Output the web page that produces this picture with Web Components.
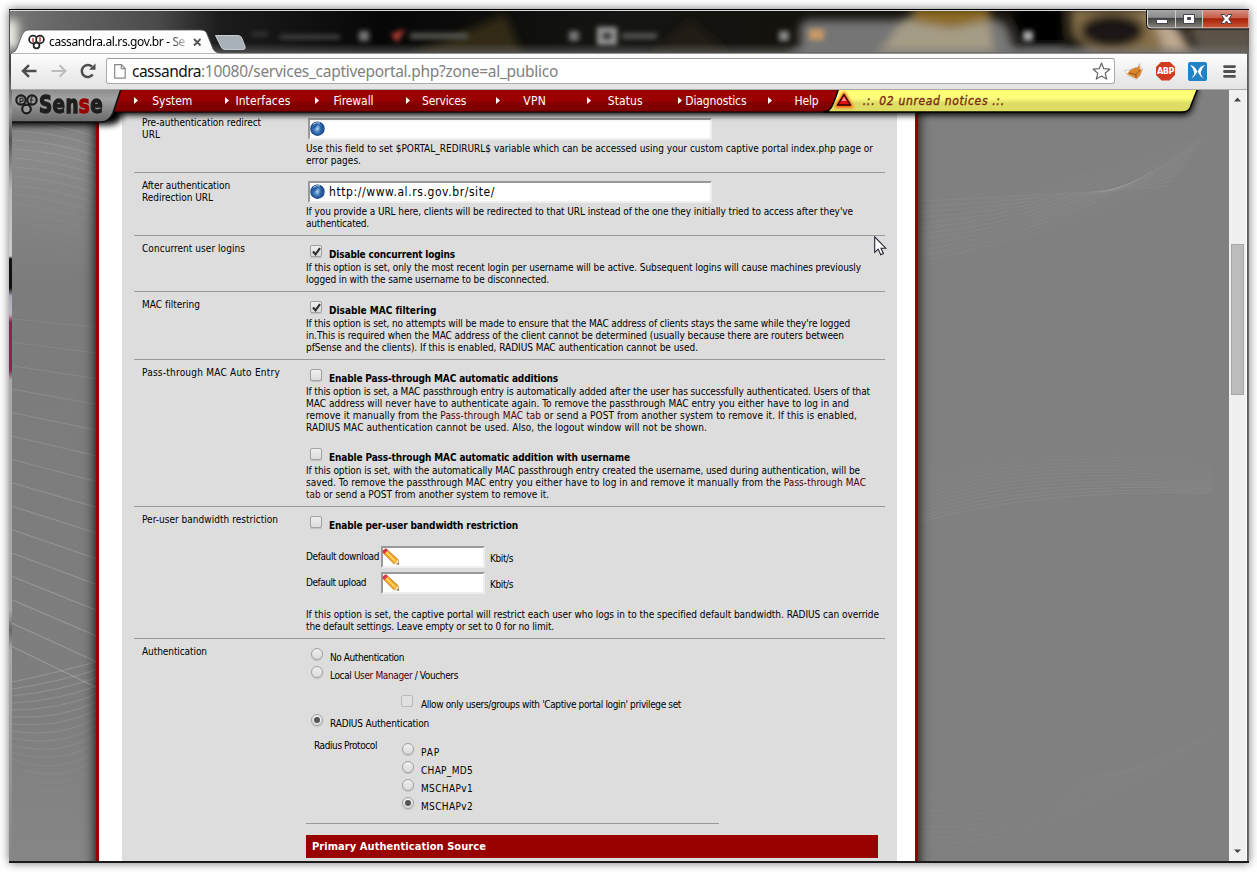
<!DOCTYPE html>
<html lang="en">
<head>
<meta charset="utf-8">
<title>cassandra.al.rs.gov.br - Services: Captive portal</title>
<style>
html,body{margin:0;padding:0;background:#fff;overflow:hidden}
body{width:1257px;height:872px;font:10px/12px "DejaVu Sans Condensed","Noto Sans",sans-serif;color:#000}
</style>
</head>
<body>
<browser-window>
  <title-strip></title-strip>
  <tool-bar></tool-bar>
  <portal-page>
    <setting-row h="63"><span slot="label"><fit-text w="119">Pre-authentication redirect</fit-text><br><fit-text w="18">URL</fit-text></span>
      <url-field></url-field>
      <help-text><fit-text w="567">Use this field to set $PORTAL_REDIRURL$ variable which can be accessed using your custom captive portal index.php page or</fit-text><fit-text w="55">error pages.</fit-text></help-text>
    </setting-row>
    <setting-row h="63"><span slot="label"><fit-text w="88">After authentication</fit-text><br><fit-text w="71">Redirection URL</fit-text></span>
      <url-field><fit-text w="166">http://www.al.rs.gov.br/site/</fit-text></url-field>
      <help-text><fit-text w="547">If you provide a URL here, clients will be redirected to that URL instead of the one they initially tried to access after they've</fit-text><fit-text w="63">authenticated.</fit-text></help-text>
    </setting-row>
    <setting-row h="56"><span slot="label"><fit-text w="103">Concurrent user logins</fit-text></span>
      <check-option checked><fit-text w="126">Disable concurrent logins</fit-text></check-option>
      <help-text><fit-text w="555">If this option is set, only the most recent login per username will be active. Subsequent logins will cause machines previously</fit-text><fit-text w="243">logged in with the same username to be disconnected.</fit-text></help-text>
    </setting-row>
    <setting-row h="68"><span slot="label"><fit-text w="58">MAC filtering</fit-text></span>
      <check-option checked><fit-text w="107">Disable MAC filtering</fit-text></check-option>
      <help-text><fit-text w="544">If this option is set, no attempts will be made to ensure that the MAC address of clients stays the same while they're logged</fit-text><fit-text w="538">in.This is required when the MAC address of the client cannot be determined (usually because there are routers between</fit-text><fit-text w="392">pfSense and the clients). If this is enabled, RADIUS MAC authentication cannot be used.</fit-text></help-text>
    </setting-row>
    <setting-row h="147"><span slot="label"><fit-text w="138">Pass-through MAC Auto Entry</fit-text></span>
      <check-option><fit-text w="229">Enable Pass-through MAC automatic additions</fit-text></check-option>
      <help-text><fit-text w="564">If this option is set, a MAC passthrough entry is automatically added after the user has successfully authenticated. Users of that</fit-text><fit-text w="543">MAC address will never have to authenticate again. To remove the passthrough MAC entry you either have to log in and</fit-text><fit-text w="551">remove it manually from the <span style="color:#500000">Pass-through MAC tab</span> or send a POST from another system to remove it. If this is enabled,</fit-text><fit-text w="401">RADIUS MAC authentication cannot be used. Also, the logout window will not be shown.</fit-text></help-text>
      <check-option style="margin-top:5px"><fit-text w="301">Enable Pass-through MAC automatic addition with username</fit-text></check-option>
      <help-text><fit-text w="554">If this option is set, with the automatically MAC passthrough entry created the username, used during authentication, will be</fit-text><fit-text w="560">saved. To remove the passthrough MAC entry you either have to log in and remove it manually from the <span style="color:#500000">Pass-through MAC</span></fit-text><fit-text w="243"><span style="color:#500000">tab</span> or send a POST from another system to remove it.</fit-text></help-text>
    </setting-row>
    <setting-row h="132"><span slot="label"><fit-text w="136">Per-user bandwidth restriction</fit-text></span>
      <check-option><fit-text w="189">Enable per-user bandwidth restriction</fit-text></check-option>
      <rate-field style="margin-top:14px"><fit-text w="73">Default download</fit-text></rate-field>
      <rate-field><fit-text w="60">Default upload</fit-text></rate-field>
      <help-text style="margin-top:11px"><fit-text w="573">If this option is set, the captive portal will restrict each user who logs in to the specified default bandwidth. RADIUS can override</fit-text><fit-text w="248">the default settings. Leave empty or set to 0 for no limit.</fit-text></help-text>
    </setting-row>
    <setting-row h="222" last><span slot="label"><fit-text w="65">Authentication</fit-text></span>
      <auth-options></auth-options>
    </setting-row>
  </portal-page>
</browser-window>

<script>
const make=(name,html,setup)=>customElements.define(name,class extends HTMLElement{
  constructor(){super();this.attachShadow({mode:'open'}).innerHTML=html}
  connectedCallback(){if(setup)setup.call(this,this.shadowRoot)}
});

make('browser-window',`<style>
:host{display:flex;flex-direction:column;box-sizing:border-box;position:relative;width:1240px;height:854px;margin:9px 0 0 9px;padding:0 2px 2px 2px;border-top:1px solid #000;
background:linear-gradient(90deg,#0000 1238px,#55504a 1238px,#777 1240px),linear-gradient(180deg,#555 0,#444 60px,#999 100px,#555 130px,#bbb 180px,#ccc 246px,#111 249px,#111 278px,#aab 286px,#b9b9c4 304px,#902050 312px,#902050 360px,#aaa 370px,#aaa 600px,#666 620px,#aaa 640px,#888 840px);
box-shadow:0 0 9px rgba(0,0,0,.55)}
.foot{position:absolute;left:0;right:0;bottom:0;height:2px;background:#1b1b1e}
</style><slot></slot><div class="foot"></div>`);

make('title-strip',`<style>
:host{display:block;position:relative;height:44px;margin:0 -2px 0 -1px;overflow:hidden;color:#000}
.art{position:absolute;left:-1px;top:0}
.tab{position:relative;display:flex;align-items:center;margin:19px 0 0 18px;height:26px;width:181px;font:12px/16px "Noto Sans","Open Sans",sans-serif}
.tab svg{flex:none}.name{margin-left:4px;margin-top:-1px;width:136px;-webkit-mask:linear-gradient(90deg,#000 118px,#0004 136px)}
.ctl{position:absolute;right:0;top:0}
</style>
<svg class="art" width="1240" height="44" viewBox="9 10 1240 44">
<defs><filter id="b" x="-20%" y="-40%" width="140%" height="180%"><feGaussianBlur stdDeviation="5"/></filter>
<filter id="s" x="-20%" y="-40%" width="140%" height="180%"><feGaussianBlur stdDeviation="2.600"/></filter>
<linearGradient id="g"><stop offset="0" stop-color="#777"/><stop offset=".04" stop-color="#666"/><stop offset=".12" stop-color="#4a4a4a"/><stop offset=".17" stop-color="#1c1c1c"/><stop offset=".3" stop-color="#070707"/><stop offset=".5" stop-color="#151513"/><stop offset=".63" stop-color="#14120d"/><stop offset="1" stop-color="#16120c"/></linearGradient>
<linearGradient id="f" x2="0" y2="1"><stop offset=".75" stop-color="#777" stop-opacity="0"/><stop offset="1" stop-color="#777" stop-opacity=".6"/></linearGradient>
<linearGradient id="t" x2="0" y2="1"><stop offset="0" stop-color="#fff"/><stop offset="1" stop-color="#fbfbfb"/></linearGradient></defs>
<rect x="9" y="10" width="1240" height="44" fill="url(#g)"/>
<g filter="url(#b)"><rect x="0" y="20" width="18" height="30" fill="#e8ebe2"/><path d="M410 54L460 34 505 14 522 54z" fill="#302b16"/><path d="M650 54L690 20 730 54z" fill="#241c16"/>
<path d="M800 60V26Q803 20 811 20H996Q1006 20 1010 34L1018 60z" fill="#747474"/><path d="M790 50h460v10H790z" fill="#777"/>
<path d="M905 18h84l6 42H874z" fill="#a59c86"/><path d="M912 8h76l4 12-40 8-38-6z" fill="#8b6b20"/>
<path d="M1070 8h90l36 48h-100l-24-20z" fill="#85704a"/><ellipse cx="1112" cy="31" rx="32" ry="17" fill="#1c1814"/><path d="M1143 10q40 8 46 44l-25-2q-4-24-21-42z" fill="#bda890"/><path d="M1186 24h70v34h-56z" fill="#5c5349"/><path d="M1012 8h50v40h-40z" fill="#050505"/></g>
<g filter="url(#s)"><path d="M252 34h16" stroke="#444" stroke-width="3"/><path d="M280 37h60" stroke="#4a4a4a" stroke-width="4"/><rect x="359" y="31" width="10" height="10" fill="#777"/><path d="M391 34l14-5-8 14z" fill="#b33c35"/><path d="M410 36h58" stroke="#55554f" stroke-width="6"/><rect x="569" y="31" width="10" height="10" fill="#777"/><rect x="597" y="27" width="20" height="18" fill="#999"/><rect x="602" y="32" width="10" height="8" fill="#333"/><path d="M622 36h35" stroke="#555" stroke-width="6"/><rect x="779" y="31" width="10" height="10" fill="#888"/><rect x="809" y="29" width="15" height="11" fill="#c89a66"/><rect x="1023" y="31" width="10" height="10" fill="#aaa"/></g>
<rect x="9" y="10" width="1240" height="44" fill="url(#f)"/>
<path d="M9 10.5H1249" stroke="#ddd"/>
<path d="M11 54v-1q5-1 6-5l5-13q2-5 6-5H200q6 0 7 4l6 15q2 4 7 4H1244q3 0 3 1z" fill="url(#t)" stroke="#555" stroke-width=".8"/>
<path d="M215.500 35.500H238q3 0 4 3l3 8q1 3-2 3h-18q-3 0-4-3z" fill="#a9b1b8" stroke="#c8ccd0"/>
</svg>
<div class="tab"><svg width="17" height="16" viewBox="0 0 17 16" fill="#fff" stroke="#222" stroke-width="1.700"><circle cx="5" cy="5.500" r="3.900"/><circle cx="12" cy="5.500" r="3.900"/><circle cx="8.500" cy="11.500" r="2.900"/><path d="M5 4v4M12 3v5" stroke="#b22" stroke-width="1.300"/></svg>
<span class="name"><fit-text w="136">cassandra.al.rs.gov.br - Se</fit-text></span>
<svg width="9" height="9" viewBox="0 0 9 9" style="margin-left:8px"><path d="M1 1l6.500 6.500M7.500 1L1 7.500" stroke="#555" stroke-width="1.900"/></svg></div>
<svg class="ctl" width="103" height="20" viewBox="0 0 103 20"><defs><linearGradient id="a" x2="0" y2="1"><stop offset="0" stop-color="#aaa"/><stop offset=".44" stop-color="#8a8a8a"/><stop offset=".5" stop-color="#444"/><stop offset="1" stop-color="#8a857e"/></linearGradient><linearGradient id="r" x2="0" y2="1"><stop offset="0" stop-color="#d89182"/><stop offset=".45" stop-color="#c65c47"/><stop offset=".5" stop-color="#a51f08"/><stop offset="1" stop-color="#cc5637"/></linearGradient></defs>
<path d="M1.500-1V14q0 4 4 4H102.500V-1z" fill="url(#a)" stroke="#ddd"/><path d="M56.500 0H102.500V17.500H56.500z" fill="url(#r)" stroke="#e0a090" stroke-width=".8"/><path d="M.5-1V14.500q0 4.500 4.500 4.500H103" fill="none" stroke="#111"/><path d="M29.500 0V18M56.500 0V18" stroke="#ccc"/>
<rect x="10.500" y="9.500" width="11" height="4" fill="#fff" stroke="#445"/><path d="M37.500 4.500h11v9h-11zM41.500 7.500h3v2h-3z" fill="#fff" stroke="#445" fill-rule="evenodd"/>
<path d="M75 4.500h3.500l2 2.500 2-2.500H86L82.700 9 86 13.500h-3.500l-2-2.500-2 2.500H75L78.300 9z" fill="#fff" stroke="#445"/></svg>`);

make('tool-bar',`<style>
:host{display:flex;align-items:center;box-sizing:border-box;height:36px;padding:0 9px 1px 10px;border-bottom:1px solid #aaa;background:linear-gradient(#fdfdfd,#e3e3e3);font:16px/22px "Noto Sans","Open Sans",sans-serif}
svg{flex:none}
.box{display:flex;align-items:center;box-sizing:border-box;width:1009px;height:26px;margin-left:9px;padding:0 3px 0 7px;background:#fff;border:1px solid #aaa;border-top-color:#999;border-radius:3px}
.url{margin-left:6px;flex:1;color:#808080;white-space:nowrap;font-size:0;padding-top:5px}.url fit-text{font-size:15.500px}
.host{color:#111}
.abp{display:grid;place-items:center;width:19px;height:19px;margin-left:12px;background:#d03b1f;clip-path:polygon(29% 0,71% 0,100% 29%,100% 71%,71% 100%,29% 100%,0 71%,0 29%);color:#fff;font:bold 9px/11px "DejaVu Sans Condensed",sans-serif}
</style>
<svg width="16" height="14" viewBox="0 0 16 14" fill="none" stroke="#4d4d4d" stroke-width="2.500"><path d="M15.500 7H2M8 1.200L2 7l6 5.800"/></svg>
<svg width="16" height="14" viewBox="0 0 16 14" fill="none" stroke="#bdbdbd" stroke-width="2" style="margin-left:14px"><path d="M.5 7H14M8.500 1.200l6 5.800-6 5.800"/></svg>
<svg width="17" height="16" viewBox="0 0 17 16" style="margin-left:13px" fill="none"><path d="M12.700 11.500A6 6 0 1 1 12 3.700" stroke="#4d4d4d" stroke-width="2.500"/><path d="M9 6.800h6.500V.6z" fill="#4d4d4d"/></svg>
<div class="box"><svg width="12" height="15" viewBox="0 0 12 15" fill="#fff" stroke="#888" stroke-width="1.200"><path d="M.7.700H7.500L11.200 4.500V14.200H.7zM7.300 1v3.700h4"/></svg>
<span class="url"><fit-text class="host" w="69">cassandra</fit-text><fit-text w="357">:10080/services_captiveportal.php?zone=al_publico</fit-text></span>
<svg width="19" height="18" viewBox="0 0 19 18" fill="#fff" stroke="#666" stroke-width="1.200" stroke-linejoin="round"><path d="M9.500 1l2.300 5.700 6 .5-4.600 4 1.500 5.900-5.200-3.200-5.200 3.200 1.500-5.900-4.600-4 6-.5z"/></svg></div>
<svg width="20" height="19" viewBox="0 0 20 19" style="margin-left:9px"><path d="M.8 8.500l4.700-.5L14 5 15.500 1.500 16 5.500l3 1-3 7-3.500 4-9-4.500z" fill="#fff" stroke="#bbb" stroke-width=".8"/><path d="M4.500 10Q8 5.500 13.500 5.500L15.500 3l.3 3.500L18 8l-2 5.500-3.500 3.300L8 14.500 3 12z" fill="#d9862c"/><path d="M5 11l7 1.500 4-4.500M12 12.500v3.500" stroke="#8f4b12" fill="none" stroke-width=".9"/></svg>
<div class="abp"><fit-text w="17">ABP</fit-text></div>
<svg width="19" height="19" viewBox="0 0 19 19" style="margin-left:13px"><rect width="19" height="19" rx="2" fill="#2183c4"/><path d="M2 3q5 1 6.500 5l.8 1.500-.8 1.500Q7 14.500 3.500 16.500 6.500 13 6.300 10.500 5 5.500 2 3zM17 3q-5 1-6.500 5l-.8 1.500.8 1.500q1.500 3.500 5 5.500-3-3.500-2.800-6Q14 5.500 17 3z" fill="#fff"/></svg>
<svg width="13" height="13" viewBox="0 0 13 13" style="margin-left:16px"><path d="M1.500 1.600h10M1.500 6.500h10M1.500 11.400h10" stroke="#505050" stroke-width="2.800" stroke-linecap="round"/></svg>`);

make('portal-page',`<style>
:host{display:grid;grid-template-columns:1fr 18px;position:relative;height:771px;margin:0 0 0 1px;overflow:hidden;background:#808080}
.view{display:block;position:relative;overflow:hidden;background:#808080}
.waves{position:absolute;left:0;top:0}
.sheet{position:relative;box-sizing:border-box;width:822px;height:800px;margin-left:84px;background:#fff;border:solid #900;border-width:0 3px;box-shadow:0 0 12px #000;padding:0 18px 0 23px;display:grid}
.panel{background:#ddd;padding:20px 12px 0}
nav-bar{position:absolute;left:0;top:0}
.cursor{position:absolute;left:862px;top:146px}
</style>
<div class="view"><svg class="waves" width="1217" height="771" viewBox="12 90 1217 771" fill="none" stroke="#fff"></svg>
<div class="sheet"><div class="panel"><slot></slot></div></div><nav-bar></nav-bar>
<svg class="cursor" width="13" height="20" viewBox="0 0 13 20"><path d="M.7.800V16.300l3.500-3.200 2.500 5.600 2.700-1.200L7 12.200h4.700z" fill="#fff" stroke="#223" stroke-width="1.100"/></svg></div>
<scroll-bar></scroll-bar>`,function(r){
  let p='<defs><linearGradient id="l" x2="0" y2="1"><stop offset="0" stop-color="#777"/><stop offset=".08" stop-color="#8a8a8a"/><stop offset=".25" stop-color="#7c7c7c"/><stop offset=".8" stop-color="#7e7e7e"/><stop offset="1" stop-color="#868686"/></linearGradient></defs><rect x="12" y="90" width="90" height="771" fill="url(#l)" stroke="none"/>';
  const c=(d,o)=>{p+=`<path d="${d}" stroke-opacity="${Math.max(o,.01).toFixed(3)}"/>`};
  for(let i=0;i<15;i++)c(`M12 ${319+23.400*i}L99 ${327.500+25.800*i}`,.07+.013*i);
  for(let i=0;i<14;i++)c(`M12 ${122+i*9}Q55 ${122+i*9.500} 99 ${138+i*9.400}`,.12-.008*i);
  for(let i=0;i<16;i++)c(`M12 ${682+i*7}Q60 ${672+i*9.500} 99 ${661+i*8}`,.18-.011*i);
  for(let i=0;i<12;i++)c(`M918 ${201+i*5.500}Q1060 ${195+i*4} ${1170+i*4} ${186-i*5}`,.05-.002*i);
  for(let i=0;i<12;i++)c(`M918 ${261-i*3}Q1080 ${230-i*5} ${1170+i*3} ${182-i*4}`,.03);
  for(let i=0;i<17;i++)c(`M918 ${523-i*3.300}Q1030 ${489-i*4.300} 1212 ${493-i*2}`,.06-.003*i);
  for(let i=0;i<14;i++)c(`M918 ${843-i*5.500}Q1060 ${850-i*6} ${1225-i*8} ${725+i*4}`,.03-.0015*i);
  r.querySelector('.waves').innerHTML=p;
});

make('nav-bar',`<style>
:host{display:block;width:1217px;height:44px;color:#fff;font:12px/22px "DejaVu Sans Condensed","Noto Sans",sans-serif}
.shape{position:absolute;left:0;top:0}
.items{position:relative;display:grid;grid-template-columns:repeat(8,90.600px) auto;width:1100px;padding-left:115px}
.it{position:relative;text-align:center}.it svg{position:absolute;left:7px;top:7px}
.note{margin-left:11px;color:#7b2b12;font-style:italic;-webkit-text-stroke:.35px #7b2b12}
.logo{position:absolute;left:27px;top:0;color:#1e1e1e;font:bold 25px/30px "DejaVu Sans Condensed",sans-serif;transform-origin:0 50%;white-space:nowrap;-webkit-text-stroke:1.300px;letter-spacing:.5px}
.logo b{color:#900;font-weight:inherit}
</style>
<svg class="shape" width="1217" height="44" viewBox="12 90 1217 44"><defs>
<linearGradient id="r" x2="0" y2="1"><stop offset="0" stop-color="#8d0000"/><stop offset=".12" stop-color="#a00000"/><stop offset=".5" stop-color="#980000"/><stop offset=".55" stop-color="#880000"/><stop offset="1" stop-color="#780000"/></linearGradient>
<linearGradient id="y" x2="0" y2="1"><stop offset="0" stop-color="#ffff70"/><stop offset=".4" stop-color="#ffff7c"/><stop offset=".6" stop-color="#dede66"/><stop offset="1" stop-color="#dcdc60"/></linearGradient>
<linearGradient id="k" x2="0" y2="1"><stop offset="0" stop-color="#8a8a8a"/><stop offset=".3" stop-color="#a2a2a2"/><stop offset="1" stop-color="#686868"/></linearGradient>
<filter id="b" x="-5%" y="-50%" width="110%" height="220%"><feGaussianBlur stdDeviation="3"/></filter><filter id="q" x="-60%" y="-60%" width="220%" height="220%"><feGaussianBlur stdDeviation="1.800"/></filter></defs>
<path d="M0 84H1199L1192 109Q1189 115 1183 115H123Q120 124 110 125H0z" fill="#000" filter="url(#b)"/>
<path d="M100 90H860V112H100z" fill="url(#r)"/><path d="M100 112H840" stroke="#100"/>
<path d="M838.500 89Q836 97 833 104 830 112 823 112H1182Q1188 112 1190 108L1197.500 89z" fill="url(#y)" stroke="#000" stroke-width="1.500"/>
<path d="M0 89H121L113 113Q109 122 101 122H0z" fill="url(#k)" stroke="#111" stroke-width="1.600"/>
<g fill="#999" stroke="#1c1c1c" stroke-width="2.200"><circle cx="21" cy="100" r="4.700"/><circle cx="32" cy="100" r="4.700"/><circle cx="26.500" cy="109" r="4.300"/></g><path d="M20 103.500V98.500q4-1.500 3 2.500-2 1-3 0M31 104v-5q0-2 2-2M30 100h3.500" stroke="#222" stroke-width="1.100" fill="none"/>
<path d="M844 94l7 12h-14z" fill="#f30" stroke="#f40" stroke-width="3" filter="url(#q)"/><path d="M844 94.500l6.500 10.500h-13z" fill="#e01010" stroke="#200" stroke-width="1.400" stroke-linejoin="round"/><path d="M844 96.500l2.800 4.500h-5.600z" fill="#f88"/>
</svg>
<div class="logo">Sen<b>s</b>e</div>
<div class="items"></div>`,function(r){
  r.querySelector('.items').innerHTML=[['System',40],['Interfaces',55],['Firewall',40],['Services',44],['VPN',23],['Status',35],['Diagnostics',61],['Help',24]].map(([t,w])=>
  `<div class="it"><svg width="5" height="8" viewBox="0 0 5 8"><path d="M0 0l4 3.500L0 7z" fill="#fff"/></svg><fit-text w="${w}">${t}</fit-text></div>`).join('')+'<div class="note"><fit-text w="142">.:. 02 unread notices .:.</fit-text></div>';
  const g=r.querySelector('.logo');g.style.transform=`scaleX(${64/g.getBoundingClientRect().width})`;
});

make('scroll-bar',`<style>
:host{display:flex;flex-direction:column;align-items:center;box-sizing:border-box;padding:7px 1px 7px 0;background:#f0f0f0;border-right:1px solid #fff}
.thumb{box-sizing:border-box;width:13px;height:151px;margin:142px 0 auto 1px;background:#bcbcbc;border:1px solid #a6a6a6}
</style><svg width="7" height="5" viewBox="0 0 7 5"><path d="M0 4.500L3.500.500 7 4.500z" fill="#444"/></svg><div class="thumb"></div><svg width="7" height="5" viewBox="0 0 7 5"><path d="M0 .500L3.500 4 7 .500z" fill="#444"/></svg>`);

make('setting-row',`<style>
:host{display:grid;grid-template-columns:164px 1fr;box-sizing:border-box;border-bottom:1px solid #999;padding-left:8px}
:host([last]){border:0}
.l{padding-top:7px}.b{display:flex;flex-direction:column;align-items:flex-start}
</style><div class="l"><slot name="label"></slot></div><div class="b"><slot></slot></div>`,function(){this.style.height=this.getAttribute('h')+'px'});

make('help-text',`<style>:host{display:flex;flex-direction:column;align-items:flex-start}</style><slot></slot>`);

make('url-field',`<style>
:host{display:flex;align-items:center;box-sizing:border-box;width:404px;height:22px;margin:8px 0 3px 2px;border:2px solid;border-color:#999 #eee #eee #999;background:#fff;font-size:12px;line-height:16px}
svg{flex:none;margin-right:3px}
</style><svg width="16" height="16" viewBox="0 0 16 16"><defs><radialGradient id="g" cx=".5" cy=".5"><stop offset="0" stop-color="#b5d3ec"/><stop offset=".45" stop-color="#4a86c4"/><stop offset="1" stop-color="#123f80"/></radialGradient></defs><circle cx="7.500" cy="7.700" r="7.200" fill="url(#g)"/><path d="M3 3q3-2.500 6-1l-2 2-1 3-3 1zM10 5l3-1 1 4-3 4-2-2z" fill="#1a4c8c" opacity=".5"/><path d="M3 3.500Q6 .800 10 2" stroke="#b9d8f2" fill="none"/></svg><slot></slot>`);

const box=`.m{flex:none;box-sizing:border-box;width:12px;height:12px;border:1px solid #a2a2a2;border-radius:2px;background:linear-gradient(#eee,#dcdcdc);box-shadow:0 1px 1px #0002;display:grid;place-items:center}`;
make('check-option',`<style>
:host{display:flex;height:26px;font-weight:bold}
${box}.m{margin:9px 7px 0 4px}.t{margin-top:13px}svg{display:none}:host([checked]) svg{display:block}
</style><span class="m"><svg width="9" height="9" viewBox="0 0 9 9"><path d="M1 4.500l2.500 2.800L8 1.200" fill="none" stroke="#333" stroke-width="2.200"/></svg></span><span class="t"><slot></slot></span>`);

make('rate-field',`<style>
:host{display:flex;height:22px;margin-bottom:4px}
:host(:first-of-type){margin-top:13px!important}
.n{width:75px;margin-top:5px}.f{box-sizing:border-box;width:104px;height:22px;border:2px solid;border-color:#999 #eee #eee #999;background:#fff}
.u{margin:7px 0 0 5px}svg{display:block;margin-left:-1px}
</style><span class="n"><slot></slot></span><span class="f"><svg width="18" height="18" viewBox="0 0 18 18"><path d="M1 2.500L4 .700 16 11.500l.8 4.800-5-.8L1.200 5z" fill="#f9a51a" stroke="#a5691c" stroke-width=".7"/><path d="M4 4l9 9" stroke="#ffd266" stroke-width="1.800"/><path d="M.8 2.500L4 .500l2 1.800-3.500 3.500L.8 4.500z" fill="#d73550"/><path d="M12 15.500l3.900-4 .9 4.800z" fill="#f4dcae"/><path d="M15 16l1.600-1.500.3 2z" fill="#555"/></svg></span><span class="u"><fit-text w="23">Kbit/s</fit-text></span>`);

make('radio-option',`<style>
:host{display:flex;height:18px}
${box}.m{margin:2px 7px 0 5px;border-radius:50%}.t{margin-top:6px}
:host([square]) .m{border-radius:2px;border-color:#bbb;box-shadow:none;background:#e0e0e0;margin:2px 8px 0 4px}
:host([on]) .m::after{content:"";width:6px;height:6px;border-radius:50%;background:#555}
</style><span class="m"></span><span class="t"><slot></slot></span>`);

make('auth-options',`<style>
:host{display:block;width:572px;padding-top:7px}
.sub{margin:11px 0 0 91px;height:19px}
.proto{display:grid;grid-template-columns:91px auto;margin-top:10px}.proto .n{padding:0 0 0 8px}
.proto radio-option{position:relative;top:.5px}
hr{border:0;height:1px;width:413px;background:#999;margin:11px 0 11px}
.bar{display:flex;align-items:center;box-sizing:border-box;height:23px;padding:1px 0 0 6px;background:#900;color:#fff;font-size:11px;line-height:14px;font-weight:bold}
</style>
<radio-option><fit-text w="74">No Authentication</fit-text></radio-option>
<radio-option><fit-text w="128">Local <span style="color:#500000">User Manager</span> / Vouchers</fit-text></radio-option>
<radio-option class="sub" square><fit-text w="260">Allow only users/groups with 'Captive portal login' privilege set</fit-text></radio-option>
<radio-option on><fit-text w="99">RADIUS Authentication</fit-text></radio-option>
<div class="proto"><span class="n"><fit-text w="63">Radius Protocol</fit-text></span><div>
<radio-option><fit-text w="19">PAP</fit-text></radio-option><radio-option><fit-text w="52">CHAP_MD5</fit-text></radio-option><radio-option><fit-text w="52">MSCHAPv1</fit-text></radio-option><radio-option on><fit-text w="52">MSCHAPv2</fit-text></radio-option></div></div>
<hr><div class="bar"><fit-text w="174">Primary Authentication Source</fit-text></div>`);

/* A single line of text whose tracking is adjusted so that it occupies w pixels. */
make('fit-text',`<style>:host{display:inline-block;white-space:pre}</style><slot></slot>`,function(){
  const w=+this.getAttribute('w'),n=this.textContent.length;
  this.style.letterSpacing='0px';
  const nat=this.getBoundingClientRect().width;
  this.style.letterSpacing=((w-nat)/n).toFixed(4)+'px';
});
</script>
</body>
</html>
